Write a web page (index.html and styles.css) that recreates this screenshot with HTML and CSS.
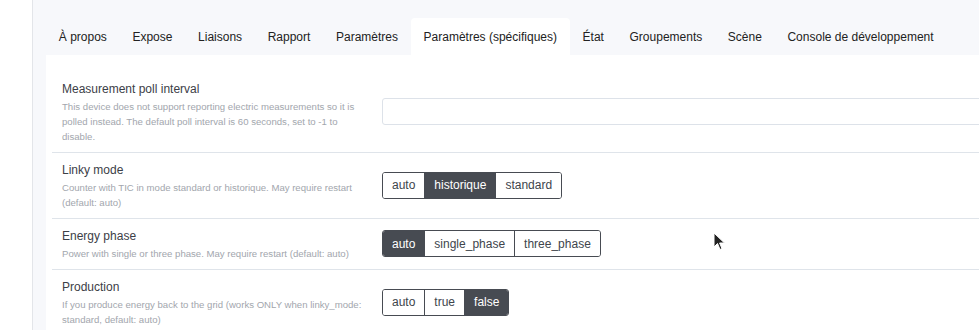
FILE: index.html
```html
<!DOCTYPE html>
<html lang="fr">
<head>
    <meta charset="UTF-8">
    <meta name="viewport" content="width=device-width, initial-scale=1.0">
    <title>Paramètres (spécifiques)</title>
    <link rel="stylesheet" href="styles.css">
</head>
<body>
    <div class="layout">
        <aside class="sidebar"></aside>
        <main class="main">
            <nav class="tabs">
                <a class="tab">À propos</a>
                <a class="tab">Expose</a>
                <a class="tab">Liaisons</a>
                <a class="tab">Rapport</a>
                <a class="tab">Paramètres</a>
                <a class="tab active">Paramètres (spécifiques)</a>
                <a class="tab">État</a>
                <a class="tab">Groupements</a>
                <a class="tab">Scène</a>
                <a class="tab">Console de développement</a>
            </nav>
            <div class="card">
                <div class="row">
                    <div class="info">
                        <div class="label">Measurement poll interval</div>
                        <div class="desc">This device does not support reporting electric measurements so it is polled instead. The default poll interval is 60 seconds, set to -1 to disable.</div>
                    </div>
                    <div class="control">
                        <input class="text-input" type="text">
                    </div>
                </div>
                <div class="row">
                    <div class="info">
                        <div class="label">Linky mode</div>
                        <div class="desc">Counter with TIC in mode standard or historique. May require restart (default: auto)</div>
                    </div>
                    <div class="control">
                        <div class="btn-group">
                            <button>auto</button>
                            <button class="on">historique</button>
                            <button>standard</button>
                        </div>
                    </div>
                </div>
                <div class="row">
                    <div class="info">
                        <div class="label">Energy phase</div>
                        <div class="desc">Power with single or three phase. May require restart (default: auto)</div>
                    </div>
                    <div class="control">
                        <div class="btn-group">
                            <button class="on">auto</button>
                            <button>single_phase</button>
                            <button>three_phase</button>
                        </div>
                    </div>
                </div>
                <div class="row">
                    <div class="info">
                        <div class="label">Production</div>
                        <div class="desc">If you produce energy back to the grid (works ONLY when linky_mode: standard, default: auto)</div>
                    </div>
                    <div class="control">
                        <div class="btn-group">
                            <button>auto</button>
                            <button>true</button>
                            <button class="on">false</button>
                        </div>
                    </div>
                </div>
            </div>
        </main>
    </div>
    <svg class="cursor" width="14" height="20" viewBox="0 0 14 20">
        <path d="M1 1 L1 15 L4.5 11.5 L7 17.5 L9 16.6 L6.6 11 L11.5 11 Z" fill="#222" stroke="#fff" stroke-width="1"/>
    </svg>
</body>
</html>
```

FILE: styles.css
```css
body {
    font-family: "Liberation Sans", Arial, sans-serif;
    margin: 0;
    padding: 0;
    background-color: #fff;
    overflow: hidden;
    position: relative;
    width: 979px;
    height: 330px;
}
.layout {
    display: flex;
    width: 1200px;
    height: 330px;
}
.sidebar {
    width: 32px;
    border-right: 1px solid #e3e5e9;
    background-color: #fff;
}
.main {
    flex: 1;
    background-color: #f7f8fb;
    padding: 18px 0 0 13px;
}
.tabs {
    display: flex;
    height: 37px;
}
.tab {
    padding: 1px 12.8px 0;
    line-height: 36px;
    font-size: 12px;
    color: #222;
    border-radius: 4px 4px 0 0;
}
.tab.active {
    background-color: #fff;
}
.card {
    background-color: #fff;
    padding: 17px 0 0 6px;
    height: 270px;
}
.row {
    display: flex;
    align-items: center;
    padding: 7px 0 8px 10px;
    border-top: 1px solid #dfe4ea;
}
.row:first-child {
    border-top: none;
}
.info {
    width: 304px;
    margin-right: 16px;
}
.label {
    font-size: 12px;
    line-height: 20px;
    color: #3c4047;
}
.desc {
    font-size: 9.6px;
    line-height: 15px;
    color: #a2a6ad;
}
.control {
    flex: 1;
}
.text-input {
    display: block;
    box-sizing: border-box;
    width: 100%;
    height: 27px;
    border: 1px solid #dde2e9;
    border-radius: 3px;
    background-color: #fff;
}
.btn-group {
    display: inline-flex;
    border: 1px solid #474b52;
    border-radius: 3px;
    overflow: hidden;
}
.btn-group button {
    font-family: inherit;
    font-size: 12px;
    color: #40454c;
    background-color: #fff;
    border: none;
    border-left: 1px solid #474b52;
    padding: 0 9px;
    height: 25px;
    margin: 0;
}
.btn-group button:first-child {
    border-left: none;
}
.btn-group button.on {
    background-color: #474b52;
    color: #fff;
}
.cursor {
    position: absolute;
    left: 713px;
    top: 232px;
}
```
